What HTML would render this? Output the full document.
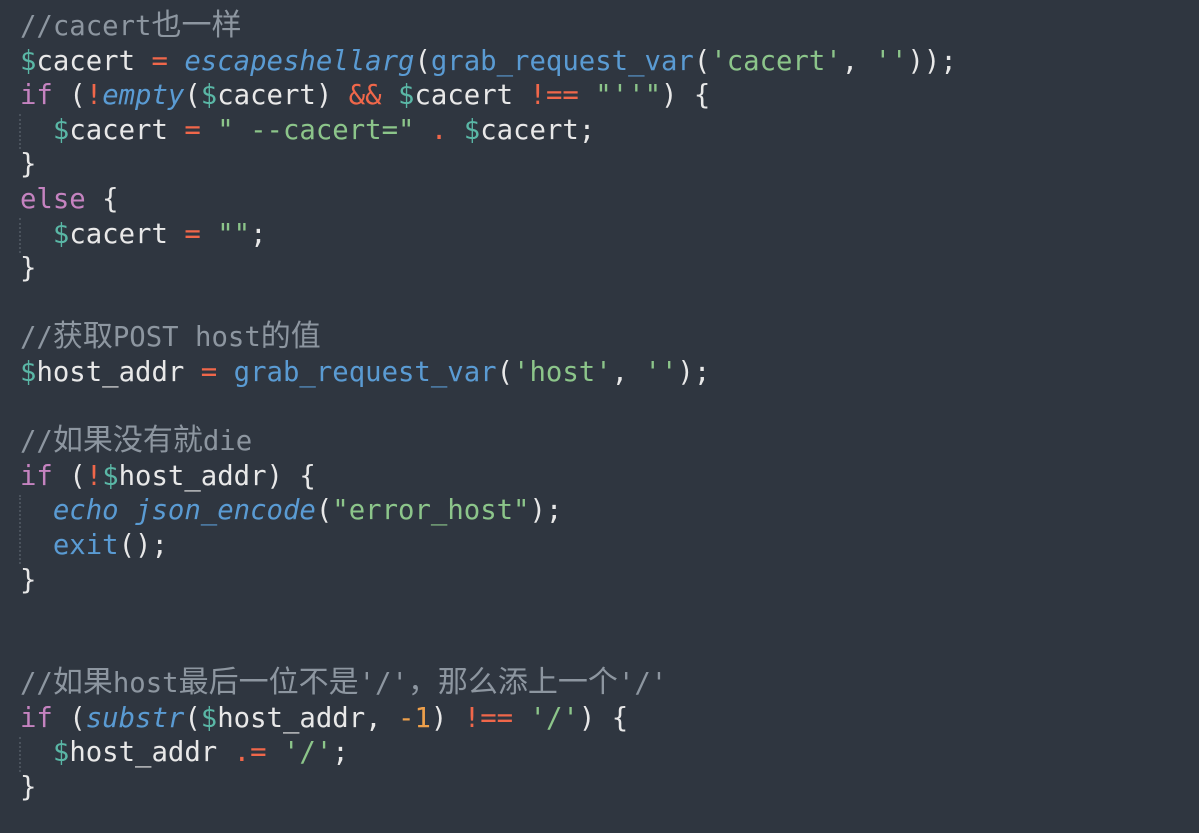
<!DOCTYPE html>
<html><head><meta charset="utf-8"><style>
html,body{margin:0;padding:0;background:#2f3640;width:1199px;height:833px;overflow:hidden}
pre{margin:0;position:absolute;left:20px;top:10px;font-family:"DejaVu Sans Mono","Noto Sans CJK SC",monospace;font-size:27.3px;line-height:34.6px;color:#e8e8e8}
.z{font-family:"Noto Sans CJK SC",sans-serif;font-size:30px;line-height:0}
.c{color:#8d96a0}.v{color:#5ab7a6}.o{color:#f0674a}.f{color:#5a9bd3;font-style:italic}.g{color:#5a9bd3}.s{color:#8cc58a}.k{color:#c583c0}.n{color:#eea04b}
.ig{position:absolute;left:19px;width:0;border-left:2px dotted #4a525c;height:34.6px}
</style></head><body>
<div class="ig" style="top:114px"></div>
<div class="ig" style="top:218px"></div>
<div class="ig" style="top:495px;height:69px"></div>
<div class="ig" style="top:737px"></div>
<pre><span class="c">//cacert<span class="z">也一样</span></span>
<span class="v">$</span>cacert <span class="o">=</span> <span class="f">escapeshellarg</span>(<span class="g">grab_request_var</span>(<span class="s">'cacert'</span>, <span class="s">''</span>));
<span class="k">if</span> (<span class="o">!</span><span class="f">empty</span>(<span class="v">$</span>cacert) <span class="o">&amp;&amp;</span> <span class="v">$</span>cacert <span class="o">!==</span> <span class="s">"''"</span>) {
  <span class="v">$</span>cacert <span class="o">=</span> <span class="s">" --cacert="</span> <span class="o">.</span> <span class="v">$</span>cacert;
}
<span class="k">else</span> {
  <span class="v">$</span>cacert <span class="o">=</span> <span class="s">""</span>;
}

<span class="c">//<span class="z">获取</span>POST host<span class="z">的值</span></span>
<span class="v">$</span>host_addr <span class="o">=</span> <span class="g">grab_request_var</span>(<span class="s">'host'</span>, <span class="s">''</span>);

<span class="c">//<span class="z">如果没有就</span>die</span>
<span class="k">if</span> (<span class="o">!</span><span class="v">$</span>host_addr) {
  <span class="f">echo</span> <span class="f">json_encode</span>(<span class="s">"error_host"</span>);
  <span class="g">exit</span>();
}


<span class="c">//<span class="z">如果</span>host<span class="z">最后一位不是</span>'/'<span class="z">，那么添上一个</span>'/'</span>
<span class="k">if</span> (<span class="f">substr</span>(<span class="v">$</span>host_addr, <span class="n">-1</span>) <span class="o">!==</span> <span class="s">'/'</span>) {
  <span class="v">$</span>host_addr <span class="o">.=</span> <span class="s">'/'</span>;
}</pre>
</body></html>
